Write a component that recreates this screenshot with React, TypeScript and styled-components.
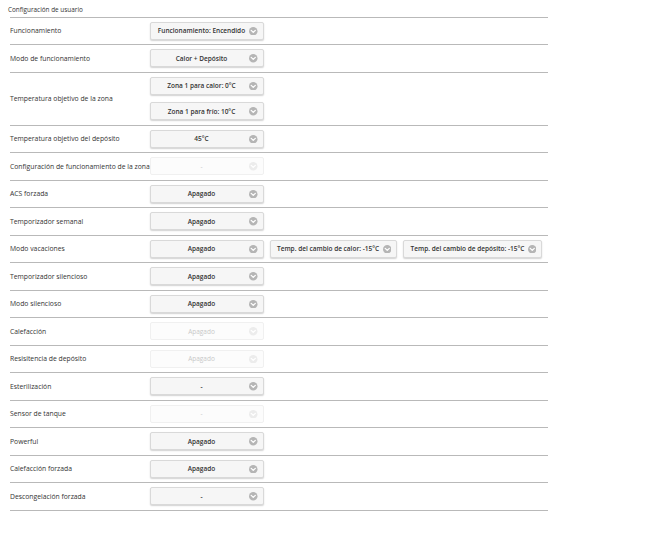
import React from "react";
import styled, { createGlobalStyle } from "styled-components";

const Global = createGlobalStyle`
  html, body { margin: 0; padding: 0; background: #ffffff; }
  body { font-family: "Open Sans", "Noto Sans", sans-serif; color: #333; }
`;

const Page = styled.div`
  padding: 5px 0 0 0;
  width: 657px;
`;

const Title = styled.div`
  font-size: 6.4px;
  line-height: 9px;
  padding-left: 8px;
  color: #333;
  height: 11.5px;
`;

const Table = styled.div`
  margin-left: 10px;
  width: 538px;
  border-top: 1px solid #b9b9b9;
`;

const Row = styled.div`
  display: flex;
  align-items: center;
  border-bottom: 1px solid #b9b9b9;
  padding: 4.25px 0;
`;

const Label = styled.div`
  width: 140px;
  flex: none;
  font-size: 6.8px;
  white-space: nowrap;
  color: #333;
`;

const Controls = styled.div<{ $stack?: boolean }>`
  display: flex;
  flex-direction: ${(p) => (p.$stack ? "column" : "row")};
  gap: ${(p) => (p.$stack ? "7.5px" : "6px")};
  align-items: flex-start;
`;

const Box = styled.div<{ $disabled?: boolean }>`
  box-sizing: border-box;
  height: 18px;
  min-width: 113.5px;
  display: inline-flex;
  align-items: center;
  gap: 3.5px;
  padding: 0 5px 0 6.5px;
  border-radius: 2px;
  border: 1px solid ${(p) => (p.$disabled ? "#f0f0f0" : "#d9d9d9")};
  background: ${(p) => (p.$disabled ? "#fcfcfc" : "#f6f6f6")};
  box-shadow: ${(p) => (p.$disabled ? "none" : "0 1px 1.5px rgba(0,0,0,0.18)")};
  color: ${(p) => (p.$disabled ? "#c8c8c8" : "#333")};
`;

const BoxText = styled.span<{ $disabled?: boolean }>`
  flex: 1;
  text-align: center;
  font-size: 6.5px;
  font-weight: ${(p) => (p.$disabled ? 400 : 600)};
  white-space: nowrap;
`;

const Chevron = ({ disabled }: { disabled?: boolean }) => (
  <svg width="8.5" height="8.5" viewBox="0 0 10 10" style={{ flex: "none" }}>
    <circle cx="5" cy="5" r="5" fill={disabled ? "#ececec" : "#b5b5b5"} />
    <path d="M2.6 4 L5 6.3 L7.4 4" fill="none" stroke="#fff" strokeWidth="1.5" strokeLinecap="round" strokeLinejoin="round" />
  </svg>
);

const Select = ({ value, disabled }: { value: string; disabled?: boolean }) => (
  <Box $disabled={disabled}>
    <BoxText $disabled={disabled}>{value}</BoxText>
    <Chevron disabled={disabled} />
  </Box>
);

type RowDef = { label: string; selects: { value: string; disabled?: boolean }[]; stack?: boolean };

const rows: RowDef[] = [
  { label: "Funcionamiento", selects: [{ value: "Funcionamiento: Encendido" }] },
  { label: "Modo de funcionamiento", selects: [{ value: "Calor + Depósito" }] },
  {
    label: "Temperatura objetivo de la zona",
    stack: true,
    selects: [{ value: "Zona 1 para calor: 0°C" }, { value: "Zona 1 para frío: 10°C" }],
  },
  { label: "Temperatura objetivo del depósito", selects: [{ value: "45°C" }] },
  { label: "Configuración de funcionamiento de la zona", selects: [{ value: "-", disabled: true }] },
  { label: "ACS forzada", selects: [{ value: "Apagado" }] },
  { label: "Temporizador semanal", selects: [{ value: "Apagado" }] },
  {
    label: "Modo vacaciones",
    selects: [
      { value: "Apagado" },
      { value: "Temp. del cambio de calor: -15°C" },
      { value: "Temp. del cambio de depósito: -15°C" },
    ],
  },
  { label: "Temporizador silencioso", selects: [{ value: "Apagado" }] },
  { label: "Modo silencioso", selects: [{ value: "Apagado" }] },
  { label: "Calefacción", selects: [{ value: "Apagado", disabled: true }] },
  { label: "Resisitencia de depósito", selects: [{ value: "Apagado", disabled: true }] },
  { label: "Esterilización", selects: [{ value: "-" }] },
  { label: "Sensor de tanque", selects: [{ value: "-", disabled: true }] },
  { label: "Powerful", selects: [{ value: "Apagado" }] },
  { label: "Calefacción forzada", selects: [{ value: "Apagado" }] },
  { label: "Descongelación forzada", selects: [{ value: "-" }] },
];

export default function App() {
  return (
    <Page>
      <Global />
      <Title>Configuración de usuario</Title>
      <Table>
        {rows.map((r) => (
          <Row key={r.label}>
            <Label>{r.label}</Label>
            <Controls $stack={r.stack}>
              {r.selects.map((s, i) => (
                <Select key={i} value={s.value} disabled={s.disabled} />
              ))}
            </Controls>
          </Row>
        ))}
      </Table>
    </Page>
  );
}
